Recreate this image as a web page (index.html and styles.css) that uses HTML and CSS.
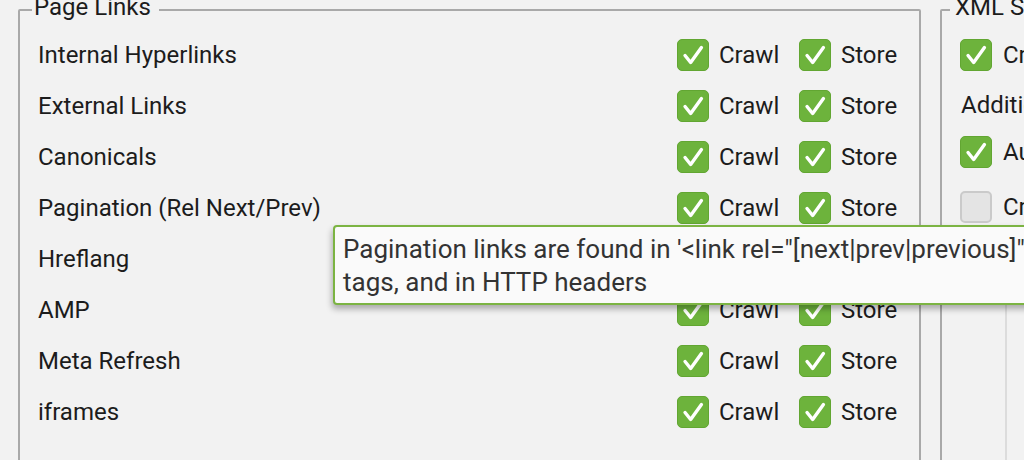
FILE: index.html
```html
<!DOCTYPE html>
<html>
<head>
<meta charset="utf-8">
<link rel="stylesheet" href="styles.css">
</head>
<body>
<div class="page">
  <fieldset class="group links">
    <legend class="legend">Page Links</legend>
    <div class="row"><span class="label">Internal Hyperlinks</span><span class="opt crawl"><span class="cb on"><svg viewBox="0 0 32 32"><path d="M7.5 16.5 L13.5 24 L25 8"/></svg></span>Crawl</span><span class="opt store"><span class="cb on"><svg viewBox="0 0 32 32"><path d="M7.5 16.5 L13.5 24 L25 8"/></svg></span>Store</span></div>
    <div class="row"><span class="label">External Links</span><span class="opt crawl"><span class="cb on"><svg viewBox="0 0 32 32"><path d="M7.5 16.5 L13.5 24 L25 8"/></svg></span>Crawl</span><span class="opt store"><span class="cb on"><svg viewBox="0 0 32 32"><path d="M7.5 16.5 L13.5 24 L25 8"/></svg></span>Store</span></div>
    <div class="row"><span class="label">Canonicals</span><span class="opt crawl"><span class="cb on"><svg viewBox="0 0 32 32"><path d="M7.5 16.5 L13.5 24 L25 8"/></svg></span>Crawl</span><span class="opt store"><span class="cb on"><svg viewBox="0 0 32 32"><path d="M7.5 16.5 L13.5 24 L25 8"/></svg></span>Store</span></div>
    <div class="row"><span class="label">Pagination (Rel Next/Prev)</span><span class="opt crawl"><span class="cb on"><svg viewBox="0 0 32 32"><path d="M7.5 16.5 L13.5 24 L25 8"/></svg></span>Crawl</span><span class="opt store"><span class="cb on"><svg viewBox="0 0 32 32"><path d="M7.5 16.5 L13.5 24 L25 8"/></svg></span>Store</span></div>
    <div class="row"><span class="label">Hreflang</span><span class="opt crawl"><span class="cb on"><svg viewBox="0 0 32 32"><path d="M7.5 16.5 L13.5 24 L25 8"/></svg></span>Crawl</span><span class="opt store"><span class="cb on"><svg viewBox="0 0 32 32"><path d="M7.5 16.5 L13.5 24 L25 8"/></svg></span>Store</span></div>
    <div class="row"><span class="label">AMP</span><span class="opt crawl"><span class="cb on"><svg viewBox="0 0 32 32"><path d="M7.5 16.5 L13.5 24 L25 8"/></svg></span>Crawl</span><span class="opt store"><span class="cb on"><svg viewBox="0 0 32 32"><path d="M7.5 16.5 L13.5 24 L25 8"/></svg></span>Store</span></div>
    <div class="row"><span class="label">Meta Refresh</span><span class="opt crawl"><span class="cb on"><svg viewBox="0 0 32 32"><path d="M7.5 16.5 L13.5 24 L25 8"/></svg></span>Crawl</span><span class="opt store"><span class="cb on"><svg viewBox="0 0 32 32"><path d="M7.5 16.5 L13.5 24 L25 8"/></svg></span>Store</span></div>
    <div class="row"><span class="label">iframes</span><span class="opt crawl"><span class="cb on"><svg viewBox="0 0 32 32"><path d="M7.5 16.5 L13.5 24 L25 8"/></svg></span>Crawl</span><span class="opt store"><span class="cb on"><svg viewBox="0 0 32 32"><path d="M7.5 16.5 L13.5 24 L25 8"/></svg></span>Store</span></div>
  </fieldset>
  <fieldset class="group xml">
    <legend class="legend xml-legend">XML Sitemaps</legend>
    <div class="xrow r1"><span class="cb on"><svg viewBox="0 0 32 32"><path d="M7.5 16.5 L13.5 24 L25 8"/></svg></span><span>Crawl Linked XML Sitemaps</span></div>
    <div class="xrow r2"><span>Additional XML Sitemap Options</span></div>
    <div class="xrow r3"><span class="cb on"><svg viewBox="0 0 32 32"><path d="M7.5 16.5 L13.5 24 L25 8"/></svg></span><span>Auto Discover XML Sitemaps via robots.txt</span></div>
    <div class="xrow r4"><span class="cb off"></span><span>Crawl These Sitemaps:</span></div>
    <div class="sitemap-list"></div>
  </fieldset>
</div>
<div class="tooltip">Pagination links are found in '&lt;link rel="[next|prev|previous]" href="..."&gt;'
tags, and in HTTP headers</div>
</body>
</html>
```

FILE: styles.css
```css
html, body {
  margin: 0;
  padding: 0;
}
body {
  width: 1024px;
  height: 460px;
  overflow: hidden;
  background: #f2f2f2;
  font-family: Roboto, "Liberation Sans", sans-serif;
  font-size: 24px;
  color: #1c1c1c;
  position: relative;
}
.page {
  display: flex;
  gap: 19px;
  padding-left: 18px;
  margin-top: -7px;
}
.group {
  margin: 0;
  padding: 0;
  border: 2px solid #a9a9a9;
  border-radius: 2px;
  box-sizing: border-box;
  height: 500px;
  flex: none;
}
.links {
  width: 903px;
  padding: 2px 18px 0 18px;
}
.xml {
  width: 420px;
  padding: 2px 0 0 18px;
}
.legend {
  font-size: 24px;
  line-height: 28px;
  padding: 0 8px 6px 2px;
  margin-left: -6px;
  color: #1c1c1c;
}
.xml-legend {
  margin-left: -10px;
  padding-left: 5px;
  white-space: nowrap;
}
.row {
  height: 51px;
  display: flex;
  align-items: center;
}
.label {
  flex: 1;
  white-space: nowrap;
}
.opt {
  display: flex;
  align-items: center;
  gap: 10px;
  flex: none;
}
.crawl { width: 122px; }
.store { width: 102px; }
.cb {
  width: 32px;
  height: 32px;
  box-sizing: border-box;
  border-radius: 5px;
  flex: none;
  display: block;
}
.cb.on {
  background: #6db33c;
  border: 1px solid #62a632;
}
.cb.off {
  background: #e4e4e4;
  border: 2px solid #cacaca;
}
.cb svg {
  display: block;
  width: 30px;
  height: 30px;
  fill: none;
  stroke: #ffffff;
  stroke-width: 3.6;
  stroke-linecap: round;
  stroke-linejoin: round;
}
.xrow {
  display: flex;
  align-items: center;
  gap: 11px;
  white-space: nowrap;
}
.r1 { height: 51px; }
.r2 { height: 49px; padding-left: 1px; }
.r3 { height: 46px; }
.r4 { height: 51px; padding-top: 6px; }
.sitemap-list {
  margin-left: 45px;
  margin-top: 4px;
  height: 260px;
  border-left: 2px solid #dcdcdc;
}
.tooltip {
  position: absolute;
  left: 333px;
  top: 225px;
  width: 1000px;
  box-sizing: border-box;
  background: #fafafa;
  border: 2px solid #7cb443;
  border-radius: 4px;
  box-shadow: -1px 4px 6px rgba(0, 0, 0, 0.3);
  padding: 6px 8px 3px 8px;
  font-size: 26px;
  line-height: 33px;
  color: #333333;
  white-space: pre;
  height: 80px;
  overflow: hidden;
}
```
